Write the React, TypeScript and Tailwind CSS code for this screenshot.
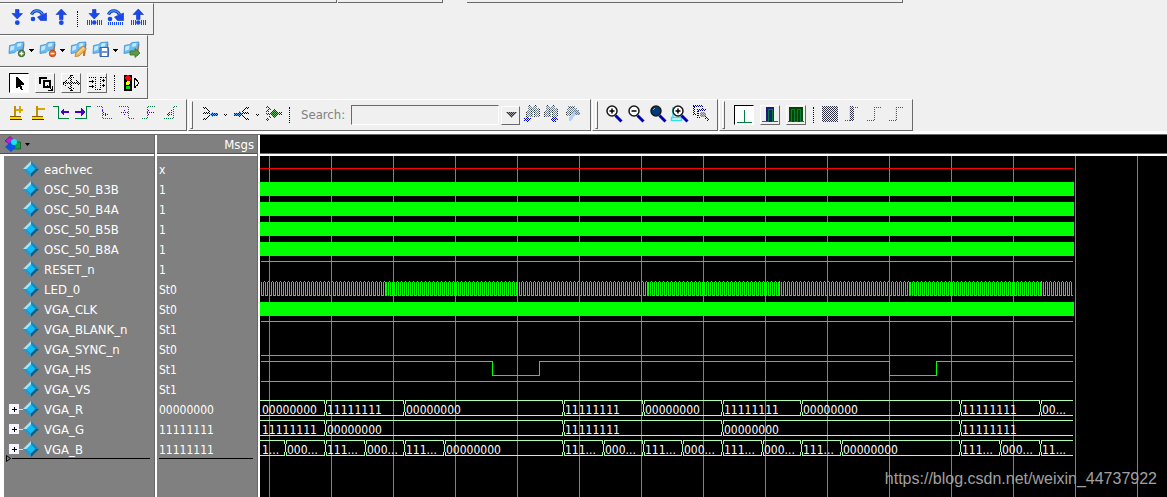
import type { ReactNode } from "react";
import clsx from "clsx";

type Kind = "x" | "clock" | "high" | "low" | "led" | "hsync" | "bus";

interface Signal {
  name: string;
  value: string;
  kind: Kind;
  segments?: [number, string][];
}

const END = 813;

const signals: Signal[] = [
  { name: "eachvec", value: "x", kind: "x" },
  { name: "OSC_50_B3B", value: "1", kind: "clock" },
  { name: "OSC_50_B4A", value: "1", kind: "clock" },
  { name: "OSC_50_B5B", value: "1", kind: "clock" },
  { name: "OSC_50_B8A", value: "1", kind: "clock" },
  { name: "RESET_n", value: "1", kind: "high" },
  { name: "LED_0", value: "St0", kind: "led" },
  { name: "VGA_CLK", value: "St0", kind: "clock" },
  { name: "VGA_BLANK_n", value: "St1", kind: "high" },
  { name: "VGA_SYNC_n", value: "St0", kind: "low" },
  { name: "VGA_HS", value: "St1", kind: "hsync" },
  { name: "VGA_VS", value: "St1", kind: "high" },
  {
    name: "VGA_R",
    value: "00000000",
    kind: "bus",
    segments: [
      [0, "00000000"], [65, "11111111"], [144, "00000000"], [303, "11111111"], [383, "00000000"],
      [462, "11111111"], [541, "00000000"], [700, "11111111"], [780, "00..."],
    ],
  },
  {
    name: "VGA_G",
    value: "11111111",
    kind: "bus",
    segments: [[0, "11111111"], [65, "00000000"], [303, "11111111"], [462, "00000000"], [700, "11111111"]],
  },
  {
    name: "VGA_B",
    value: "11111111",
    kind: "bus",
    segments: [
      [0, "1..."], [25, "000..."], [65, "111..."], [105, "000..."], [144, "111..."], [184, "00000000"],
      [303, "111..."], [343, "000..."], [383, "111..."], [422, "000..."], [462, "111..."], [502, "000..."],
      [541, "111..."], [581, "00000000"], [700, "111..."], [740, "000..."], [780, "11..."],
    ],
  },
];

const gridLines = Array.from({ length: 40 }, (_, i) => 9 + i * 62);

// The LED toggles every 2px; at each of these points it slips by one pixel
const ledSlips = [126, 257, 387, 518, 650, 781];

function ledPath(y: number) {
  let d = "";
  let x = 1;
  let high = false;
  let slip = 0;
  while (x < END) {
    d += `M${x} ${y + 1}h1v14h-1z`;
    d += high ? `M${x + 1} ${y}h1v1h-1z` : `M${x + 1} ${y + 14}h1v1h-1z`;
    high = !high;
    x += 2;
    if (x > ledSlips[slip]) {
      d += `M${x - 1} ${y + 1}h1v14h-1z`;
      x += 1;
      slip++;
    }
  }
  return d;
}

function Trace({ signal, row }: { signal: Signal; row: number }) {
  const top = 5 + row * 20;
  switch (signal.kind) {
    case "x":
      return <rect x="0" y={top + 7} width={END} height="1" fill="#ff0000" />;
    case "clock":
      return <rect x="0" y={top + 1} width={END + 1} height="14" fill="#00ff00" />;
    case "high":
      return <rect x="1" y={top} width={END - 1} height="1" fill="#00ff00" />;
    case "low":
      return <rect x="1" y={top + 14} width={END - 1} height="1" fill="#00ff00" />;
    case "led":
      return <path d={ledPath(top)} fill="#00ff00" />;
    case "hsync":
      return (
        <path
          d={`M1 ${top + 0.5}H232.5v14h47v-14H629.5v14h47v-14H${END}`}
          fill="none"
          stroke="#00ff00"
        />
      );
    case "bus":
      return (
        <g>
          {signal.segments?.map(([x, label], i, all) => {
            const end = i + 1 < all.length ? all[i + 1][0] : END;
            const y = top - 1;
            return (
              <g key={x}>
                <path
                  d={`M${i ? x + 1 : x} ${y + 0.5}H${end}M${i ? x + 1 : x} ${y + 15.5}H${end}`}
                  stroke="#b0ffb0"
                />
                {i > 0 && (
                  <path
                    d={`M${x + 1.5} ${y}v4M${x + 0.5} ${y + 4}v8M${x + 1.5} ${y + 12}v4M${x - 0.5} ${y}v4M${x - 0.5} ${y + 12}v4`}
                    stroke="#b0ffb0"
                  />
                )}
                <text x={x + 2} y={y + 14} fill="#ffffff" className="text-[12px]">
                  {label}
                </text>
              </g>
            );
          })}
        </g>
      );
  }
}

function Icon({ children, crisp = false }: { children: ReactNode; crisp?: boolean }) {
  return (
    <svg width="22" height="22" viewBox="0 0 22 22" fill="none" shapeRendering={crisp ? "crispEdges" : "auto"} className="shrink-0">
      {children}
    </svg>
  );
}

interface ToolProps {
  label: string;
  children: ReactNode;
  crisp?: boolean;
  className?: string;
}

function Tool({ label, children, crisp, className }: ToolProps) {
  return (
    <button type="button" aria-label={label} title={label} className={clsx("flex size-[22px] shrink-0 items-center justify-center", className)}>
      <Icon crisp={crisp}>{children}</Icon>
    </button>
  );
}

function BoxTool({ label, pressed = false, children }: { label: string; pressed?: boolean; children: ReactNode }) {
  return (
    <button
      type="button"
      aria-label={label}
      aria-pressed={pressed}
      className={clsx(
        "flex size-5 shrink-0 items-center justify-center border",
        pressed
          ? "border-t-black border-l-black border-r-white border-b-white bg-white"
          : "border-t-white border-l-white border-r-[#696969] border-b-[#696969]",
      )}
    >
      <svg width="18" height="18" viewBox="0 0 18 18" fill="none" shapeRendering="crispEdges">
        {children}
      </svg>
    </button>
  );
}

function Caret({ label, small = false }: { label: string; small?: boolean }) {
  return (
    <button type="button" aria-label={label} className={clsx("flex h-[22px] shrink-0 items-center", small ? "w-[10px] justify-center" : "w-[9px] pl-px")}>
      <svg width="6" height="4" viewBox="0 0 6 4" shapeRendering="crispEdges">
        {small ? <path d="M1 1h1v1H1zM3 1h1v1H3zM2 2h1v1H2z" fill="#000" /> : <path d="M0 0h5v1H0zM1 1h3v1H1zM2 2h1v1H2z" fill="#000" />}
      </svg>
    </button>
  );
}

function Dots() {
  return <div className="h-4 border-l border-dotted border-black" />;
}

function Toolbar({ children, className }: { children: ReactNode; className?: string }) {
  return (
    <div role="toolbar" className={clsx("flex h-8 shrink-0 items-center border-y border-r border-t-white border-r-[#696969] border-b-[#696969]", className)}>
      {children}
    </div>
  );
}

function Grip() {
  return <div className="h-7 w-[3px] shrink-0 border border-t-white border-l-white border-r-[#696969] border-b-[#696969]" />;
}

// Two-pixel checkers that give the disabled icons their stippled look
function Stipples() {
  const stipples = [
    ["stipple-dark", "#303030"],
    ["stipple-gray", "#70808c"],
    ["stipple-navy", "#303048"],
    ["stipple-blue", "#0000f0"],
    ["stipple-sky", "#0078f8"],
    ["stipple-green", "#006000"],
  ];
  return (
    <svg width="0" height="0" className="absolute" aria-hidden="true">
      <defs>
        {stipples.map(([id, color]) => (
          <pattern key={id} id={id} width="2" height="2" patternUnits="userSpaceOnUse">
            <path d="M0 0h1v1H0zM1 1h1v1H1z" fill={color} shapeRendering="crispEdges" />
          </pattern>
        ))}
      </defs>
    </svg>
  );
}

const arrowDown = <path d="M9.5 1.5h3.5v4h3.5L11.3 11 6 5.5h3.5z" fill="#1748f0" stroke="#1230b8" strokeWidth="0.6" />;
const arrowUp = <path d="M9.5 11.5h3.5v-5h3.5L11.3 1 6 6.500h3.500z" fill="#1748f0" stroke="#1230b8" strokeWidth="0.6" />;
const arrowOver = (
  <>
    <path d="M3.500 6.500C5.500 1.500 12 1.500 14.500 6.500" stroke="#1230b8" strokeWidth="3.200" />
    <path d="M3.500 6.500C5.500 1.500 12 1.500 14.500 6.500" stroke="#3f8cff" strokeWidth="1.600" />
    <path d="M9.500 9l9-4v7.500h-6z" fill="#1748f0" stroke="#1230b8" strokeWidth="0.6" />
    <circle cx="5" cy="11" r="2.300" fill="#1748f0" />
  </>
);
const bars = <path d="M4.500 12v5M6.500 12v5M8.500 12v5M14.500 12v5M16.500 12v5M18.500 12v5" stroke="#1748f0" strokeWidth="1" />;

const flag = (
  <>
    <path d="M15.500 3.500l3 .5-1.500 12h-2z" fill="#b8722c" />
    <path d="M3.500 5.500l5-1 2.500-2 7-.5-1.500 7.500-5.500 1-2 2-6 1z" fill="#6cbcf0" stroke="#3f8fd0" strokeWidth="0.8" />
    <path d="M4.500 6.500l4-1-.5 4-4 1.500zM11.500 3.500l4-.5-.5 3-4 1z" fill="#c4eaff" />
  </>
);

function Lens({ fill = "#ffffff", children }: { fill?: string; children?: ReactNode }) {
  return (
    <>
      <path d="M12.500 11.500l6 6" stroke="#0000b8" strokeWidth="3" />
      <circle cx="9" cy="7" r="5" fill={fill} stroke="#181818" strokeWidth="1.500" />
      {children}
    </>
  );
}

const binoculars = (
  <>
    <path d="M6 2h3v1h2V2h4v2h2v3h1v6h-5V9h-2v4H5V7h1V4z" fill="url(#stipple-gray)" />
    <path d="M7 1h2v1H7zM12 1h3v1h-3zM9 4h1v9H9zM12 5h1v8h-1zM17 5h1v8h-1zM4 8h1v5H4z" fill="url(#stipple-dark)" />
  </>
);

function Gem() {
  return (
    <svg width="16" height="16" viewBox="0 0 16 16" className="shrink-0">
      <path d="M8 0L0 8h8z" fill="#a5e3f7" />
      <path d="M8 0l8 8H8z" fill="#1787bd" />
      <path d="M0 8l8 8V8z" fill="#2397d4" />
      <path d="M16 8l-8 8V8z" fill="#075c86" />
      <path d="M8 3.500L12.500 8 8 12.500 3.500 8z" fill="#0cbdf6" />
    </svg>
  );
}

function Toolbars() {
  return (
    <header className="flex flex-col items-start bg-[#f0f0f0]">
      <div className="flex h-[3px] w-full">
        <div className="w-[337px] border-r border-b border-[#696969]" />
        <div className="ml-px w-[105px] border-r border-b border-[#696969]" />
        <div className="ml-6 w-[436px] border-r border-b border-[#696969]" />
      </div>

      <Toolbar className="w-[154px] pl-[6px]">
        <Tool label="Step Into">{arrowDown}<circle cx="11.300" cy="14.700" r="2.400" fill="#1748f0" /></Tool>
        <Tool label="Step Over">{arrowOver}</Tool>
        <Tool label="Step Out">{arrowUp}<circle cx="11.300" cy="14.700" r="2.400" fill="#1748f0" /></Tool>
        <div className="flex w-[11px] shrink-0 justify-center"><Dots /></div>
        <Tool label="Step Into Instance">{arrowDown}<circle cx="11.300" cy="14.500" r="2.200" fill="#1748f0" />{bars}</Tool>
        <Tool label="Step Over Instance">
          {arrowOver}
          <path d="M3.500 14v3M5.500 14v3M7.500 14v3M9.500 14v3M11.500 14v3M13.500 14v3M15.500 14v3M17.500 14v3" stroke="#1748f0" />
        </Tool>
        <Tool label="Step Out Instance">{arrowUp}<circle cx="11.300" cy="14.500" r="2.200" fill="#1748f0" />{bars}</Tool>
      </Toolbar>

      <Toolbar className="w-[148px] pl-[6px]">
        <Tool label="Add Bookmark">
          {flag}
          <circle cx="15.500" cy="13.500" r="3.200" fill="#5a9048" stroke="#38602a" />
          <path d="M15.500 11.500v4M13.500 13.500h4" stroke="#fff" strokeWidth="1.300" />
        </Tool>
        <Caret label="Add Bookmark menu" />
        <Tool label="Delete Bookmark">
          {flag}
          <circle cx="15.500" cy="13.500" r="3.200" fill="#e8622a" stroke="#b84818" />
          <path d="M13.500 13.500h4" stroke="#fff" strokeWidth="1.500" />
        </Tool>
        <Caret label="Delete Bookmark menu" />
        <Tool label="Edit Bookmark">
          {flag}
          <path d="M7 16.500l1-4 7-6.500 3.500 3-7.500 7z" fill="#f0b858" stroke="#b87830" strokeWidth="0.8" />
          <path d="M9.500 13.500l6.500-6" stroke="#ffe8a8" />
        </Tool>
        <Tool label="Save Bookmarks">
          {flag}
          <path d="M10 7.500h8.500v9H10z" fill="#6f94e0" stroke="#3a60b8" />
          <path d="M12 8h5v3h-5zM12 13h5v3h-5z" fill="#fff" />
        </Tool>
        <Caret label="Save Bookmarks menu" />
        <Tool label="Jump to Bookmark">
          {flag}
          <path d="M9 11h5V8.500l5 4.500-5 4.500V15H9z" fill="#5c9b44" stroke="#38702a" strokeWidth="0.8" />
        </Tool>
      </Toolbar>

      <Toolbar className="w-[148px] pl-[9px]">
        <div className="flex gap-[6px]">
          <BoxTool label="Select Mode" pressed>
            <path d="M6 3v11h1l2-2 2 4h2l-2-5h3v-1L7 3z" fill="#000" />
          </BoxTool>
          <BoxTool label="Zoom Mode">
            <path d="M3 3h8v2H5v5H3z" fill="#000" />
            <path d="M7.500 7h6v6h-6z" stroke="#000" strokeWidth="2" />
            <path d="M11 11l5 5M16.500 12v4.500H12" stroke="#000" />
          </BoxTool>
          <BoxTool label="Pan Mode">
            <path d="M9.500 1v16M1 9.500h16M8.500 2v15M2 8.500h15" stroke="#000" strokeDasharray="1 1" />
            <path d="M6 5l3.500-4L13 5M6 13l3.500 4L13 13M5 6L1 9.500 5 13M14 6l3.500 3.500L14 13" stroke="#000" strokeDasharray="1 1" />
          </BoxTool>
          <BoxTool label="Edit Mode">
            <path d="M7.500 3v13M12.500 3v13M1 3.500h6M7 15.500h5M13 3.500h5" stroke="#000" strokeDasharray="1 1" />
            <path d="M1 7.500h5M4.500 6v3M1 12.500h5M4.500 11v3M14 6.500h3M14 11.500h3M15.500 5v3M15.500 10v3" stroke="#000" />
          </BoxTool>
        </div>
        <div className="flex w-[14px] justify-center"><Dots /></div>
        <Tool label="Stop Drawing" crisp>
          <path d="M3 3h8v16H3z" fill="#000" />
          <circle cx="7" cy="6" r="2.800" fill="#ff0000" />
          <circle cx="7" cy="11" r="2" fill="#ffff00" />
          <circle cx="7" cy="15.500" r="2" fill="#00e000" />
          <path d="M13.500 6.500v9l2-1 2-3.500-2-3.500z" stroke="#000" />
        </Tool>
      </Toolbar>

      <div className="flex">
        <Toolbar className="w-[187px] pl-[6px]">
          <Tool label="Insert Cursor" crisp>
            <path d="M9 2v10" stroke="#c09000" strokeWidth="2" />
            <path d="M10 5.500h7M14 2v7" stroke="#d8a800" strokeWidth="2" />
            <path d="M4.500 13.500v-1h10v1" stroke="#806000" />
            <path d="M4 13h11v2H4z" fill="#ffd800" />
            <path d="M4 15.500h12" stroke="#403000" />
          </Tool>
          <Tool label="Delete Cursor" crisp>
            <path d="M9 2v10" stroke="#c09000" strokeWidth="2" />
            <path d="M10 5h7" stroke="#d8a800" strokeWidth="2" />
            <path d="M4.500 13.500v-1h10v1" stroke="#806000" />
            <path d="M4 13h11v2H4z" fill="#ffd800" />
            <path d="M4 15.500h12" stroke="#403000" />
          </Tool>
          <Tool label="Find Previous Transition" crisp>
            <path d="M3 2.500h5.500v12H19" stroke="#008040" />
            <path d="M10 8l4-4v3h5v2h-5v3z" fill="#4400c8" />
          </Tool>
          <Tool label="Find Next Transition" crisp>
            <path d="M3 14.500h11.500v-12H19" stroke="#008040" />
            <path d="M13 8L9 4v3H3v2h6v3z" fill="#4400c8" />
          </Tool>
          <Tool label="Find Previous Falling Edge" crisp>
            <path d="M3 2.500h5.500v12H19" stroke="#008040" strokeDasharray="1 1" />
            <path d="M8 6.500h2M9 8.500h2M9 10.500h6M11.500 9v4" stroke="#4400c8" strokeDasharray="1 1" />
          </Tool>
          <Tool label="Find Next Falling Edge" crisp>
            <path d="M3 2.500h9.500v12H19" stroke="#008040" strokeDasharray="1 1" />
            <path d="M5 8.500h7M8 6.500h2M8 10.500h2" stroke="#4400c8" strokeDasharray="1 1" />
          </Tool>
          <Tool label="Find Previous Rising Edge" crisp>
            <path d="M4 14.500h5.500v-12H18" stroke="#008040" strokeDasharray="1 1" />
            <path d="M9 8.500h7M10 6.500h2M10 10.500h2" stroke="#4400c8" strokeDasharray="1 1" />
          </Tool>
          <Tool label="Find Next Rising Edge" crisp>
            <path d="M4 14.500h9.500v-12H18" stroke="#008040" strokeDasharray="1 1" />
            <path d="M7 10.500h5M9 8.500h3M11 6.500h2M8.500 9v4" stroke="#4400c8" strokeDasharray="1 1" />
          </Tool>
        </Toolbar>

        <Toolbar className="ml-px w-[403px] border-l border-l-white pl-px">
          <Grip />
          <div className="flex pl-[6px]">
            <Tool label="Trace Back" crisp>
              <path d="M4 3.500h3.500v2h2v2h2M4 9.500h7M4 15.500h3.500v-2h2v-2h2" stroke="#000" strokeDasharray="1 1" />
              <path d="M5 4.500h3.500v2h2M5 8.500h6M5 14.500h3.500v-2h2" stroke="#000" strokeDasharray="1 1" />
              <path d="M11 10l3-3v2h5v3h-5v2z" fill="#58a8f8" />
              <path d="M11 10l3-3v2h5v3h-5v2z" fill="url(#stipple-blue)" />
            </Tool>
            <Caret label="Trace Back menu" small />
            <Tool label="Trace Forward" crisp>
              <path d="M18 3.500h-3.500v2h-2v2h-2M18 9.500h-7M18 15.500h-3.500v-2h-2v-2h-2" stroke="#000" strokeDasharray="1 1" />
              <path d="M17 4.500h-3.500v2h-2M17 8.500h-6M17 14.500h-3.500v-2h-2" stroke="#000" strokeDasharray="1 1" />
              <path d="M11 10L8 7v2H3v3h5v2z" fill="#58a8f8" />
              <path d="M11 10L8 7v2H3v3h5v2z" fill="url(#stipple-blue)" />
            </Tool>
            <Caret label="Trace Forward menu" small />
            <Tool label="Trace Path" crisp>
              <path d="M3 2h3v2h2v2H6v2H3V6h2V4H3zM3 9h6v2H3zM3 14h3v-2h2v2H6v3H3z" fill="url(#stipple-dark)" />
              <path d="M7 9.500L11 5l5 4.500-5 4.500z" fill="#68c068" />
              <path d="M7 9.500L11 5l5 4.500-5 4.500z" fill="url(#stipple-dark)" />
              <path d="M16 8h3v3h-3z" fill="url(#stipple-blue)" />
            </Tool>
          </div>
          <div className="flex w-2 justify-center"><Dots /></div>
          <label htmlFor="search" className="w-[58px] pl-2 text-[13px] whitespace-nowrap text-[#808080]">
            Search:
          </label>
          <input
            id="search"
            type="text"
            className="h-5 w-[148px] border border-t-[#696969] border-l-[#696969] border-r-white border-b-white bg-[#f0f0f0] px-1 text-[12px] outline-none"
          />
          <button
            type="button"
            aria-label="Search history"
            className="ml-[2px] flex size-[19px] items-center justify-center border border-t-white border-l-white border-r-[#696969] border-b-[#696969]"
          >
            <svg width="12" height="6" viewBox="0 0 12 6" shapeRendering="crispEdges">
              <path d="M0 0h12L6 6z" fill="#a0a0a0" />
              <path d="M0 0h12L6 6z" fill="url(#stipple-dark)" />
            </svg>
          </button>
          <div className="flex pl-[2px]">
            <Tool label="Find Previous" crisp className="-mr-1">
              {binoculars}
              <path d="M4 13h3v1h2v2H7v2H4v-1H2v-3h2z" fill="url(#stipple-blue)" />
            </Tool>
            <Tool label="Find Next" crisp>
              {binoculars}
              <path d="M13 13h3v1h2v2h-2v2h-3v-1h-2v-3h2z" fill="url(#stipple-blue)" />
            </Tool>
            <Tool label="Search Options" crisp>
              <path d="M6 2h7v2h2v4h-3v2H8v2H4V8h1V4h1z" fill="url(#stipple-gray)" />
              <path d="M6 3h6v1H6zM4 8h1v4H4zM8 8h1v3H8z" fill="url(#stipple-dark)" />
              <path d="M13 6h4v2h1v3h-5l-4 6H7v-3z" fill="#b4cdf4" />
              <path d="M13 6h4v2h1v3h-5z" fill="url(#stipple-gray)" />
            </Tool>
          </div>
        </Toolbar>

        <Toolbar className="ml-px w-[126px] border-l border-l-white pl-[2px]">
          <Grip />
          <div className="flex pl-[5px]">
            <Tool label="Zoom In"><Lens><path d="M9 4.500v5M6.500 7h5" stroke="#000" strokeWidth="1.500" /></Lens></Tool>
            <Tool label="Zoom Out"><Lens><path d="M6.500 7h5" stroke="#000" strokeWidth="1.500" /></Lens></Tool>
            <Tool label="Zoom Full"><Lens fill="#003c78"><path d="M6 6l2-2" stroke="#80a8d0" /></Lens></Tool>
            <Tool label="Zoom In on Active Cursor">
              <path d="M4 3v10M2.500 13.500h10v3h-10z" stroke="#30e0f0" strokeWidth="1.500" />
              <Lens><path d="M9 4.500v5M6.500 7h5" stroke="#000" strokeWidth="1.500" /></Lens>
            </Tool>
            <Tool label="Zoom Between Cursors" crisp>
              <path d="M2 1.500h9.500v3M2.500 2v8.500H6M6 5.500h9M6.500 5v8.500H10" stroke="#000090" strokeDasharray="1 1" />
              <path d="M3 2.500h7M3.500 3v7M7 6.500h7M7.500 7v6" stroke="#000090" strokeDasharray="1 1" />
              <path d="M10 8h4v1h1v3h-1v1h-4v-1H9V9h1z" fill="#c4c4c4" />
              <path d="M10 8h4v1h1v3h-1v1h-4v-1H9V9h1z" fill="url(#stipple-gray)" />
              <path d="M14 12h2v2h2v3h-2v-2h-2z" fill="url(#stipple-blue)" />
            </Tool>
          </div>
        </Toolbar>

        <Toolbar className="ml-px w-[194px] border-l border-l-white pl-[2px]">
          <Grip />
          <div className="flex items-center gap-[6px] pl-[9px]">
            <BoxTool label="Show Events" pressed>
              <path d="M2 16.500h15M9.500 4v12" stroke="#008040" />
            </BoxTool>
            <BoxTool label="Show Glitches">
              <path d="M5 1h8v15H5z" fill="#1c1c78" />
              <path d="M1 15.500h6.500v-12h3.500v12h6" stroke="#008040" />
            </BoxTool>
            <BoxTool label="Show Density">
              <path d="M2 1h14v15H2z" fill="#004800" />
              <path d="M1 15.500h3.500v-12h3v12h3v-12h3v12H17" stroke="#008040" />
            </BoxTool>
          </div>
          <div className="flex w-[14px] justify-center"><Dots /></div>
          <Tool label="Expand All Time" crisp>
            <path d="M2 2h16v16H2z" fill="url(#stipple-navy)" />
          </Tool>
          <Tool label="Expand Time" crisp>
            <path d="M8 2h4v15H8z" fill="url(#stipple-navy)" />
            <path d="M7.500 3v13" stroke="#e8e020" strokeDasharray="1 1" />
            <path d="M3 16.500h5M9 3.500h8" stroke="#008040" strokeDasharray="1 1" />
          </Tool>
          <Tool label="Collapse All Time" crisp>
            <path d="M3 16.500h7.500v-13H17" stroke="#008040" strokeDasharray="1 1" />
          </Tool>
          <Tool label="Collapse Time" crisp>
            <path d="M3 16.500h7.500v-13H17" stroke="#008040" strokeDasharray="1 1" />
            <path d="M9.500 4v12" stroke="#f0e860" strokeDasharray="1 1" />
          </Tool>
        </Toolbar>
      </div>
      <div className="h-1 w-full border-b border-b-[#696969] bg-white" />
    </header>
  );
}

const paneHeader = "h-[19px] shrink-0 border-b border-b-[#505050] bg-[#808080]";

export default function App() {
  return (
    <div className="relative flex min-h-screen flex-col overflow-hidden bg-black font-['DejaVu_Sans_Condensed','Noto_Sans',sans-serif] text-white">
      <Stipples />
      <Toolbars />
      <main className="flex flex-1">
        <section className="flex w-[155px] shrink-0 flex-col border-r border-r-[#696969] bg-white">
          <div className={clsx(paneHeader, "flex items-center")}>
            <button type="button" aria-label="Objects menu" className="flex items-center gap-1 pl-1">
              <svg width="17" height="17" viewBox="0 0 17 17" className="shrink-0">
                <path d="M1 5l5-4.500L11 5l-4 4z" fill="#c020d8" stroke="#501060" strokeWidth="0.7" />
                <path d="M8 6h8.500v7H8z" fill="#18a040" stroke="#085020" strokeWidth="0.7" />
                <path d="M1 11l6-5.500 5 5.500-5 5z" fill="#1050e8" />
                <circle cx="10" cy="6" r="3" fill="#18e0f8" />
              </svg>
              <svg width="5" height="3" viewBox="0 0 5 3"><path d="M0 0h5L2.500 3z" fill="#000" /></svg>
            </button>
          </div>
          <div className="mt-[2px] ml-1 flex-1 bg-[#808080] pt-[3px]">
            <ul>
              {signals.map((s) => (
                <li key={s.name} className="flex h-5 items-center pl-[5px] text-[13px] leading-5 whitespace-nowrap">
                  {s.kind === "bus" ? (
                    <button type="button" aria-label={`Expand ${s.name}`} className="flex w-[14px] items-center">
                      <svg width="14" height="10" viewBox="0 0 14 10" shapeRendering="crispEdges">
                        <path d="M0 0h10v10H0z" fill="#f4f4fa" />
                        <path d="M3 5h5v1H3zM5 3h1v5H5z" fill="#000" />
                        <path d="M10 5h4v1h-4z" fill="#e0e0e0" />
                      </svg>
                    </button>
                  ) : (
                    <span className="w-[14px]" />
                  )}
                  <Gem />
                  <span className="pt-[2px] pl-[5px]">{s.name}</span>
                </li>
              ))}
            </ul>
            <div className="-mt-px flex h-px items-center overflow-visible">
              <svg width="6" height="7" viewBox="0 0 6 7" className="ml-[2px] shrink-0">
                <path d="M.5.500v6l4-3z" fill="#808080" stroke="#000" />
              </svg>
              <div className="mr-1 h-px flex-1 bg-black" />
            </div>
          </div>
        </section>

        <section className="flex w-[103px] shrink-0 flex-col border-r border-l-2 border-l-white border-r-[#696969] bg-[#808080]">
          <div className={clsx(paneHeader, "pr-[3px] text-right text-[13px] leading-5")}>Msgs</div>
          <div className="h-[2px] shrink-0 bg-white" />
          <ul className="pt-[3px]">
            {signals.map((s) => (
              <li key={s.name} className="h-5 pt-px pl-[2px] text-[12px] leading-5">
                {s.value}
              </li>
            ))}
          </ul>
          <div className="-mt-px mr-1 ml-[2px] h-px shrink-0 bg-black" />
        </section>

        <section className="flex min-w-0 flex-1 flex-col border-l-2 border-l-white bg-black">
          <div className="h-[21px] shrink-0 border-b-2 border-b-white">
            <div className="h-[19px] border-b border-b-[#696969]" />
          </div>
          <div className="flex flex-1 overflow-hidden">
            <svg width="100%" className="h-auto flex-1" shapeRendering="crispEdges" role="img" aria-label="Waveforms">
              {gridLines.map((x) => (
                <line key={x} x1={x + 0.5} x2={x + 0.5} y1="0" y2="100%" stroke="#808080" />
              ))}
              {signals.map((s, i) => (
                <Trace key={s.name} signal={s} row={i} />
              ))}
            </svg>
          </div>
        </section>
      </main>
      <span className="absolute right-[10px] bottom-[6px] font-['Liberation_Sans',Arial,sans-serif] text-[16px] leading-6 text-[#a0a0a0]">
        https://blog.csdn.net/weixin_44737922
      </span>
    </div>
  );
}
